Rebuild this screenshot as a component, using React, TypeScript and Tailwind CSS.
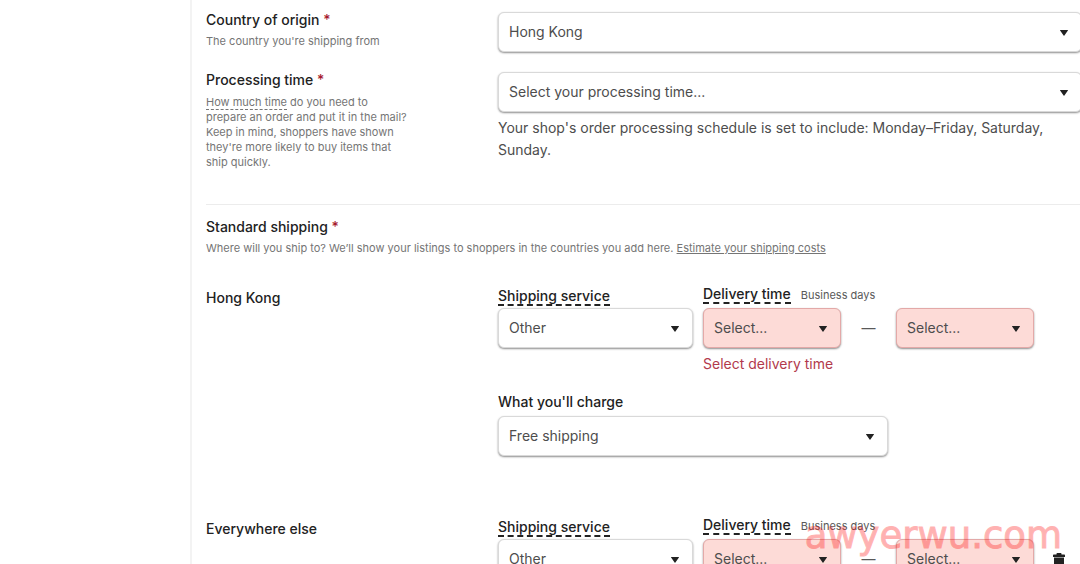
import { useId } from "react";
import type { ReactNode } from "react";

type SelectFieldProps = {
  id?: string;
  label?: string;
  options: string[];
  invalid?: boolean;
};

function SelectField({ id, label, options, invalid = false }: SelectFieldProps) {
  const tone = invalid
    ? "border-[#e3a9a8] bg-[#fddbd7]"
    : "border-[#d9d9d9] bg-white";
  return (
    <div className="relative">
      <select
        id={id}
        aria-label={label}
        aria-invalid={invalid}
        className={`block h-10 w-full appearance-none rounded-md border pr-8 pl-2.5 text-sm text-[#4d4d4d] shadow-[0_1px_2px_rgba(0,0,0,0.45)] ${tone}`}
      >
        {options.map((option) => (
          <option key={option}>{option}</option>
        ))}
      </select>
      <svg
        viewBox="0 0 8 6"
        className="pointer-events-none absolute top-[18px] right-3.5 h-1.5 w-2 fill-[#222]"
        aria-hidden="true"
      >
        <path d="M0.3 0h7.4c.3 0 .4.3.2.6L4.4 5.4c-.2.3-.6.3-.8 0L.1.6C-.1.3 0 0 .3 0z" />
      </svg>
    </div>
  );
}

function Required() {
  return <span className="text-[#a61a2e]"> *</span>;
}

function TrashIcon() {
  return (
    <svg viewBox="0 0 14 16" className="h-4 w-3.5 fill-[#222]" aria-hidden="true">
      <path d="M4.500 1.500V1c0-.6.4-1 1-1h3c.6 0 1 .4 1 1v.5H12c.6 0 1 .4 1 1V4H1V2.500c0-.6.4-1 1-1h2.500zM2 4.500h10V14.500c0 .8-.7 1.500-1.500 1.500h-7C2.700 16 2 15.300 2 14.500V4.500z" />
    </svg>
  );
}

type FormRowProps = {
  heading: ReactNode;
  children: ReactNode;
};

function FormRow({ heading, children }: FormRowProps) {
  return (
    <div className="grid grid-cols-[212px_minmax(0,1fr)] gap-x-20">
      <div>{heading}</div>
      <div>{children}</div>
    </div>
  );
}

type DestinationProps = {
  name: string;
  invalidMessage: string;
  removable?: boolean;
};

function Destination({ name, invalidMessage, removable = false }: DestinationProps) {
  const id = useId();
  return (
    <section className="mb-[59px]">
      <FormRow heading={<h3 className="mt-1 text-sm leading-5 font-medium">{name}</h3>}>
        <div className="flex items-start gap-2.5">
          <div className="mt-1 w-[195px]">
            <label
              htmlFor={`${id}-service`}
              className="mb-0.5 block w-fit border-b-2 border-dashed border-[#222] text-sm leading-4 font-medium"
            >
              Shipping service
            </label>
            <SelectField id={`${id}-service`} options={["Other"]} />
          </div>
          <div>
            <div className="mt-0.5 mb-1 flex items-center gap-2.5">
              <label
                htmlFor={`${id}-min`}
                className="border-b-2 border-dashed border-[#222] text-sm leading-4 font-medium"
              >
                Delivery time
              </label>
              <span className="text-[11px] leading-4 text-[#595959]">Business days</span>
            </div>
            <div className="flex items-center">
              <div className="w-[138px]">
                <SelectField id={`${id}-min`} options={["Select..."]} invalid />
              </div>
              <span className="w-[55px] text-center text-sm text-[#595959]">—</span>
              <div className="w-[138px]">
                <SelectField label="Maximum delivery time" options={["Select..."]} invalid />
              </div>
              {removable && (
                <button type="button" aria-label={`Remove ${name}`} className="mt-1 ml-[18px]">
                  <TrashIcon />
                </button>
              )}
            </div>
            <p className="mt-1 text-sm leading-6 text-[#b23a4c]">{invalidMessage}</p>
          </div>
        </div>
        <div className="mt-4 w-[390px]">
          <label htmlFor={`${id}-charge`} className="mb-1 block text-sm leading-5 font-medium">
            What you'll charge
          </label>
          <SelectField id={`${id}-charge`} options={["Free shipping"]} />
        </div>
      </FormRow>
    </section>
  );
}

export default function App() {
  return (
    <div className="relative h-screen overflow-hidden bg-white pl-[190px] font-['Inter',sans-serif] text-[#222]">
      <main className="-mr-0.5 border-l-2 border-[#f3f3f3] pl-3.5">
        <div className="pt-3">
          <FormRow
            heading={
              <>
                <label htmlFor="origin" className="-mt-0.5 block text-sm leading-5 font-medium">
                  Country of origin
                  <Required />
                </label>
                <p className="mt-1 text-[11px] leading-[15px] text-[#757575]">
                  The country you're shipping from
                </p>
              </>
            }
          >
            <SelectField id="origin" options={["Hong Kong"]} />
          </FormRow>
        </div>

        <div className="mt-5">
          <FormRow
            heading={
              <>
                <label htmlFor="processing" className="-mt-0.5 block text-sm leading-5 font-medium">
                  Processing time
                  <Required />
                </label>
                <p className="mt-[5px] text-[11px] leading-[15px] text-[#757575]">
                  <span className="border-b border-dashed border-[#757575]">How much time</span> do
                  you need to
                  <br />
                  prepare an order and put it in the mail?
                  <br />
                  Keep in mind, shoppers have shown
                  <br />
                  they're more likely to buy items that
                  <br />
                  ship quickly.
                </p>
              </>
            }
          >
            <SelectField id="processing" options={["Select your processing time..."]} />
            <p className="mt-[5px] mr-5 text-sm leading-[22px] text-[#4d4d4d]">
              Your shop's order processing schedule is set to include: Monday–Friday, Saturday, Sunday.
            </p>
          </FormRow>
        </div>

        <hr className="mt-[34px] border-[#ececec]" />

        <h2 className="mt-3 text-sm leading-5 font-medium">
          Standard shipping
          <Required />
        </h2>
        <p className="mt-1 mb-7 text-[11px] leading-[15px] text-[#757575]">
          Where will you ship to? We’ll show your listings to shoppers in the countries you add
          here.{" "}
          <a href="#costs" className="underline">
            Estimate your shipping costs
          </a>
        </p>

        <Destination name="Hong Kong" invalidMessage="Select delivery time" />
        <Destination name="Everywhere else" invalidMessage="Select delivery time" removable />
      </main>

      <div className="pointer-events-none absolute right-[18px] bottom-2 font-['DejaVu_Sans',sans-serif] text-[37px] leading-10 text-[#ff0000] opacity-30 [-webkit-text-stroke:1px_#ff0000]">
        awyerwu.com
      </div>
    </div>
  );
}
